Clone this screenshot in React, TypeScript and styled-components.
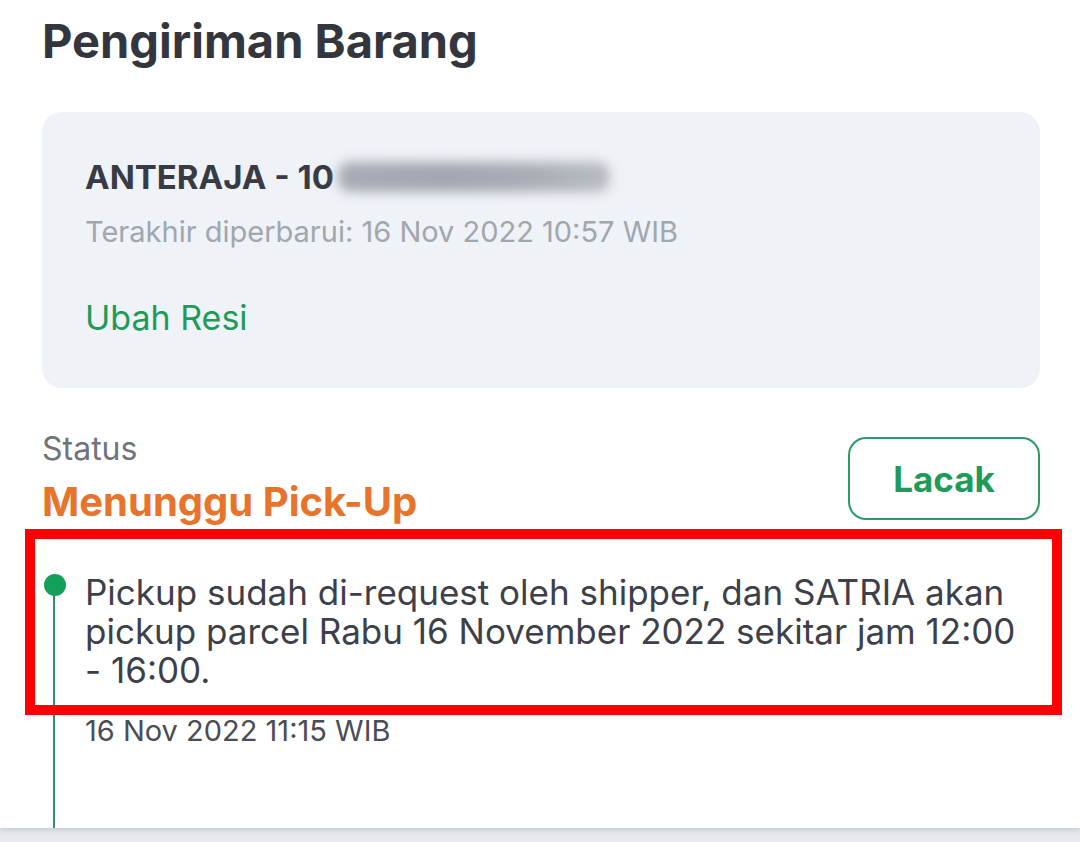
import React from 'react';
import styled, { createGlobalStyle } from 'styled-components';

const GlobalStyle = createGlobalStyle`
  html, body {
    margin: 0;
    padding: 0;
    background: #ffffff;
  }
  body {
    font-family: Inter, Roboto, 'Liberation Sans', sans-serif;
    -webkit-font-smoothing: antialiased;
  }
`;

const Screen = styled.div`
  width: 1080px;
  height: 842px;
  display: flex;
  flex-direction: column;
  overflow: hidden;
  background: #e8eaf0;
`;

const Sheet = styled.div`
  height: 828px;
  background: #ffffff;
  padding: 12px 40px 0 42px;
  box-sizing: border-box;
  box-shadow: 0 2px 6px rgba(60, 70, 90, 0.2);
  display: flex;
  flex-direction: column;
  overflow: hidden;
  position: relative;
  z-index: 1;
`;

const NavSpacer = styled.div`
  flex: 1;
  background: #e8eaf0;
`;

const Title = styled.h1`
  margin: 0;
  font-size: 47px;
  line-height: 58px;
  font-weight: 700;
  color: #33363d;
`;

const ShipmentCard = styled.div`
  margin-top: 42px;
  background: #eff2f7;
  border-radius: 20px;
  padding: 42px 43px 0;
  height: 276px;
  box-sizing: border-box;
`;

const Courier = styled.div`
  display: flex;
  align-items: center;
  font-size: 33px;
  line-height: 46px;
  font-weight: 700;
  color: #383b43;
`;

const Blurred = styled.span`
  display: inline-block;
  width: 272px;
  height: 30px;
  margin-left: 4px;
  border-radius: 12px;
  background: linear-gradient(90deg, #a8acb5 0%, #a2a6af 40%, #a9adb5 70%, #b9bcc3 100%);
  filter: blur(6px);
`;

const Updated = styled.div`
  margin-top: 12px;
  font-size: 29px;
  line-height: 40px;
  color: #a2a6ae;
`;

const ChangeLink = styled.div`
  margin-top: 43px;
  font-size: 34px;
  line-height: 46px;
  color: #1e9b58;
`;

const StatusRow = styled.div`
  margin-top: 40px;
  display: flex;
  justify-content: space-between;
  align-items: flex-start;
`;

const StatusLabel = styled.div`
  font-size: 32px;
  line-height: 42px;
  color: #707379;
`;

const StatusValue = styled.div`
  margin-top: 7px;
  font-size: 40px;
  line-height: 50px;
  font-weight: 700;
  color: #e8742c;
`;

const TrackButton = styled.button`
  margin-top: 9px;
  width: 192px;
  height: 83px;
  border: 2px solid #2e9a66;
  border-radius: 18px;
  background: #ffffff;
  color: #1e9b58;
  font-family: Inter, Roboto, 'Liberation Sans', sans-serif;
  font-size: 35px;
  font-weight: 700;
`;

const Timeline = styled.div`
  position: relative;
  flex: 1;
  margin-top: 10px;
  padding-left: 43px;
`;

const Rail = styled.div`
  position: absolute;
  left: 11px;
  top: 46px;
  bottom: 0;
  width: 2px;
  background: #2e8f6c;
`;

const Dot = styled.div`
  position: absolute;
  left: 2px;
  top: 37px;
  width: 22px;
  height: 22px;
  border-radius: 50%;
  background: #14a05a;
`;

const EventText = styled.div`
  position: relative;
  padding-top: 36px;
  font-size: 35px;
  line-height: 39px;
  color: #3d4048;
`;

const Highlight = styled.div`
  position: absolute;
  left: -60px;
  right: -22px;
  top: -8px;
  height: 186px;
  border: 10px solid #ff0000;
  box-sizing: border-box;
  pointer-events: none;
`;

const EventDate = styled.div`
  margin-top: 23px;
  font-size: 29px;
  line-height: 36px;
  color: #4a4d55;
`;

export default function App() {
  return (
    <>
      <GlobalStyle />
      <Screen>
        <Sheet>
          <Title>Pengiriman Barang</Title>
          <ShipmentCard>
            <Courier>
              ANTERAJA - 10
              <Blurred />
            </Courier>
            <Updated>Terakhir diperbarui: 16 Nov 2022 10:57 WIB</Updated>
            <ChangeLink>Ubah Resi</ChangeLink>
          </ShipmentCard>
          <StatusRow>
            <div>
              <StatusLabel>Status</StatusLabel>
              <StatusValue>Menunggu Pick-Up</StatusValue>
            </div>
            <TrackButton>Lacak</TrackButton>
          </StatusRow>
          <Timeline>
            <Rail />
            <Dot />
            <EventText>
              <Highlight />
              Pickup sudah di-request oleh shipper, dan SATRIA akan pickup parcel Rabu 16 November 2022
              sekitar jam 12:00 - 16:00.
            </EventText>
            <EventDate>16 Nov 2022 11:15 WIB</EventDate>
          </Timeline>
        </Sheet>
        <NavSpacer />
      </Screen>
    </>
  );
}
